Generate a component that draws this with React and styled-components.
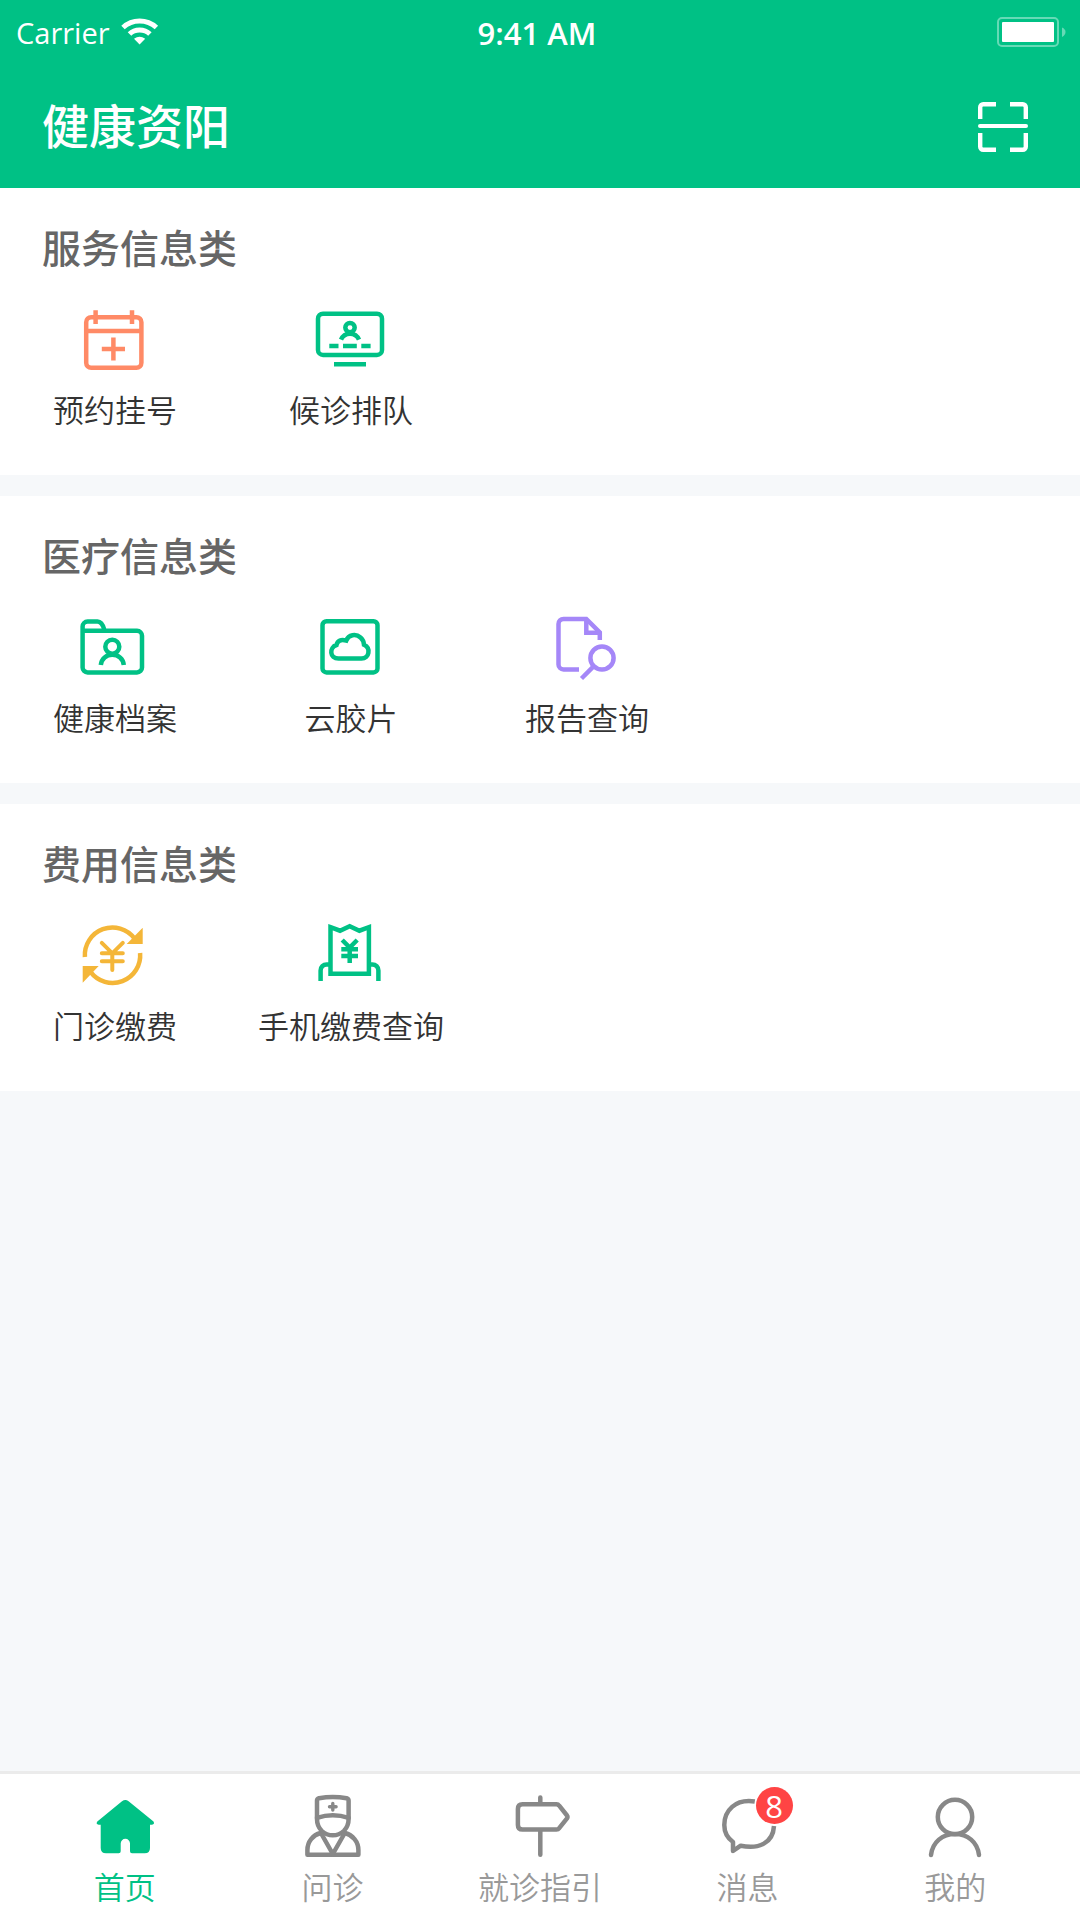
import React from 'react'
import styled, { createGlobalStyle } from 'styled-components'

const GlobalStyle = createGlobalStyle`
*{
  box-sizing: border-box;
}
body{
  margin: 0;
  background-color: #f6f8fa;
  font-family: "Noto Sans CJK SC", "Noto Sans", sans-serif;
}
a{
  color: inherit;
  text-decoration: none;
}
`

const Page = styled.div`
min-height: 100vh;
display: flex;
flex-direction: column;
`

const Header = styled.header`
background-color: #00c185;
color: white;
`

const StatusBar = styled.div`
height: 66px;
padding: 0 22px 0 16px;
display: grid;
grid-template-columns: 1fr auto 1fr;
align-items: center;
font-family: "Open Sans", "Noto Sans", sans-serif;
font-size: 29px;
line-height: 40px;
`

const Carrier = styled.div`
display: flex;
align-items: center;
gap: 11px;
`

const Time = styled.time`
font-size: 31px;
font-weight: 600;
`

const Battery = styled.div`
margin-right: -8px;
display: flex;
justify-content: flex-end;
`

const TitleBar = styled.div`
height: 122px;
padding: 0 52px 0 42px;
display: flex;
align-items: center;
justify-content: space-between;
`

const Title = styled.h1`
margin: 0;
padding-bottom: 6px;
font-size: 47px;
line-height: 64px;
font-weight: 500;
`

const ScanButton = styled.button`
display: flex;
padding: 0;
border: none;
background: none;
color: inherit;
cursor: pointer;
`

const Main = styled.main`
flex: 1;
display: flex;
flex-direction: column;
gap: 21px;
`

const Section = styled.section`
background-color: white;
padding: 30px 0 44px;
`

const SectionTitle = styled.h2`
margin: 0;
padding-left: 42px;
font-size: 39px;
line-height: 56px;
font-weight: 500;
color: #666;
`

const Tiles = styled.div`
margin-top: 30px;
padding: 0 15% 0 20px;
display: grid;
grid-template-columns: repeat(4, 1fr);
column-gap: 46px;
`

const Tile = styled.a`
display: flex;
flex-direction: column;
align-items: center;
gap: 11px;
font-size: 31px;
line-height: 44px;
font-weight: 350;
color: #333;
white-space: nowrap;
`

const TileIcon = styled.svg`
width: 72px;
height: 72px;
fill: none;
stroke: ${props => props.$color};
stroke-width: 4.5;
`

const TabBar = styled.nav`
height: 149px;
padding: 20px 21px 0;
border-top: 3px solid #ebebeb;
background-color: white;
display: grid;
grid-template-columns: repeat(5, 1fr);
`

const Tab = styled.a`
display: flex;
flex-direction: column;
align-items: center;
gap: 6px;
font-size: 31px;
line-height: 44px;
font-weight: 350;
color: ${props => props.$active ? '#00c185' : '#999'};
`

const TabIconBox = styled.span`
position: relative;
display: flex;
color: ${props => props.$active ? '#00c185' : '#888'};
`

const TabIcon = styled.svg`
width: 64px;
height: 64px;
fill: none;
stroke: currentColor;
stroke-width: 4.5;
stroke-linecap: round;
stroke-linejoin: round;
`

const Badge = styled.span`
position: absolute;
top: -7px;
left: 40px;
width: 37px;
height: 37px;
border-radius: 50%;
background-color: #ff4444;
color: white;
font-family: "Open Sans", "Noto Sans", sans-serif;
font-size: 31px;
font-weight: 400;
line-height: 39px;
text-align: center;
`

const GREEN = '#00c185'

const sections = [
  {
    title: '服务信息类',
    items: [
      {
        label: '预约挂号',
        color: '#ff8a66',
        icon: (
          <>
            <rect x="7.2" y="13.2" width="55.2" height="50.6" rx="5" />
            <path d="M7 27H62.5M16.6 6.3V20M53 6.3V20M22.8 45H46M34.4 33.4V56.6" />
          </>
        ),
      },
      {
        label: '候诊排队',
        color: GREEN,
        icon: (
          <>
            <rect x="3" y="9.7" width="64" height="41.2" rx="5" />
            <circle cx="35" cy="23.6" r="4.7" />
            <path d="M26 35.6A9.8 9.8 0 0 1 44 35.6" />
            <path d="M14.3 42H23.5M28 42H41.8M46.3 42H55.6M19 60.3H51" />
          </>
        ),
      },
    ],
  },
  {
    title: '医疗信息类',
    items: [
      {
        label: '健康档案',
        color: GREEN,
        icon: (
          <>
            <path d="M3.6 18.8H58a5 5 0 0 1 5 5V55.4a5 5 0 0 1-5 5H8.6a5 5 0 0 1-5-5V14.6a5 5 0 0 1 5-5H18.5C22.5 9.6 24 13 25.4 18" />
            <circle cx="33.3" cy="34.7" r="7" />
            <path d="M21.8 53C22.5 46.5 27.5 42.8 33.3 42.8S44.2 46.5 44.8 53" />
          </>
        ),
      },
      {
        label: '云胶片',
        color: GREEN,
        icon: (
          <>
            <rect x="7.5" y="9.2" width="55" height="51.2" rx="4" />
            <path d="M23.5 46.5C14.5 46.5 14 35.5 21.5 33C22.5 28.5 26 27.3 31.2 28.6C33.5 22.5 41 21.5 45.5 25.5C48 27.6 48.8 30 49 32.8C56 36 54.5 46.5 46.5 46.5Z" />
          </>
        ),
      },
      {
        label: '报告查询',
        color: '#a587f8',
        icon: (
          <>
            <path d="M28 57.4H12.5a5 5 0 0 1-5-5V12a5 5 0 0 1 5-5H35.3L48.8 20.5V28" />
            <path d="M35.3 7V20.8H48.8" />
            <circle cx="51" cy="46" r="11.6" />
            <path d="M42.8 54.2L30.5 66.5" />
          </>
        ),
      },
    ],
  },
  {
    title: '费用信息类',
    items: [
      {
        label: '门诊缴费',
        color: '#f4b638',
        icon: (
          <>
            <path d="M5.9 37A27.6 27.6 0 0 1 55.5 18.5M61.1 33A27.6 27.6 0 0 1 11.5 51.9" />
            <path d="M63.7 7.7V24H47.7ZM3.7 62.7V46H19.7Z" fill="#f4b638" stroke="none" />
            <path
              d="M22.8 22.9L33.3 33.3L43.8 22.9M22.8 33.2H43.8M22.8 41.3H43.8M33.3 33.3V50"
              strokeWidth="4"
              strokeLinecap="round"
            />
          </>
        ),
      },
      {
        label: '手机缴费查询',
        color: GREEN,
        icon: (
          <>
            <path d="M15.5 7.2L25 10.7L34.7 6.2L44.4 10.7L53.9 7.2V53.8H15.5Z" />
            <path d="M5.6 61V50.4a6 6 0 0 1 6-6H15.5M53.9 44.4H57.4a6 6 0 0 1 6 6V61" />
            <path d="M27.2 20L34.7 27.5L42.2 20M26.3 29.2H43M26.3 36H43M34.7 27V43" />
          </>
        ),
      },
    ],
  },
]

const tabs = [
  {
    label: '首页',
    active: true,
    icon: (
      <path
        d="M29 7.2Q32.3 4.8 35.6 7.2L60.5 27.6Q62 30.5 59 30.7H57V54q0 5.3-5.3 5.3H39q-2 0-2-2V49.5a4.6 4.6 0 0 0-9.3 0V57.3q0 2-2 2H13q-5.3 0-5.3-5.3V30.7H5.7Q2.5 30.5 4.3 27.6Z"
        fill="currentColor"
        stroke="none"
      />
    ),
  },
  {
    label: '问诊',
    icon: (
      <>
        <path d="M17 25V6.5Q17 4.8 19 4.2Q32.8 1.8 46.6 4.2Q48.6 4.8 48.6 6.5V25Q48.6 32 44 36.8Q39 41.3 32.8 41.3T21.6 36.8Q17 32 17 25Z" />
        <path d="M17 23.8Q32.8 18.6 48.6 23.8" />
        <path d="M32.8 9.5V16M29.5 12.7H36.1" strokeWidth="3.4" />
        <path d="M20.5 39C13 41 7.4 47.5 7.4 56V60.8H58.4V56C58.4 47.5 52.6 41 45 39" />
        <path d="M21.5 40L32.8 60L44.2 40" />
      </>
    ),
  },
  {
    label: '就诊指引',
    icon: (
      <>
        <path d="M32.3 3.5V9M32.3 37V60.7" />
        <path d="M14.5 10.3H48.5q1.7 0 2.7 1.4L59 21.5q1 1.4 0 2.9L51.2 34.2q-1 1.4-2.7 1.4H14.5q-4.6 0-4.6-4.6V15q0-4.7 4.6-4.7z" />
      </>
    ),
  },
  {
    label: '消息',
    badge: 8,
    icon: (
      <path
        d="M38.8 7.5C19 4.5 8.3 17 8.3 31C8.3 38 11.5 44 17 48V57L24.7 51.7C43 55.5 57 49 58 32"
        strokeLinecap="butt"
      />
    ),
  },
  {
    label: '我的',
    icon: (
      <>
        <circle cx="32" cy="23" r="17.2" />
        <path d="M8 61C9.5 48 19.5 40 32 40S54.5 48 56 61" />
      </>
    ),
  },
]

const App = () => {
  return (
    <Page>
      <GlobalStyle />

      <Header>
        <StatusBar>
          <Carrier>
            Carrier
            <svg width="38" height="32" viewBox="0 0 38 32" fill="none" stroke="white" strokeWidth="5" aria-hidden="true">
              <path d="M2 10.5Q9 4 18.6 4T35.4 10.5" />
              <path d="M8.5 17Q12.5 13 18.6 13T28.9 17" />
              <path d="M13 21.8Q18.6 17.8 24.2 21.8L18.6 27.5Z" fill="white" stroke="none" />
            </svg>
          </Carrier>
          <Time>9:41 AM</Time>
          <Battery>
            <svg width="69" height="32" viewBox="0 0 69 32" aria-hidden="true">
              <rect x="1" y="1" width="60" height="28" rx="4" fill="none" stroke="white" strokeOpacity="0.4" strokeWidth="2" />
              <rect x="5" y="5" width="52" height="20" rx="1" fill="white" />
              <path d="M65 10.5Q68.5 12 68.5 15T65 20Z" fill="white" fillOpacity="0.4" />
            </svg>
          </Battery>
        </StatusBar>

        <TitleBar>
          <Title>健康资阳</Title>
          <ScanButton aria-label="扫一扫">
            <svg width="50" height="50" viewBox="0 0 50 50" fill="none" stroke="currentColor" strokeWidth="4.4">
              <path d="M2.2 17V5.2a3 3 0 0 1 3-3H18M32 2.2H44.8a3 3 0 0 1 3 3V17M2.2 31V44.8a3 3 0 0 0 3 3H18M32 47.8H44.8a3 3 0 0 0 3-3V31" />
              <path d="M2 24H48" strokeLinecap="round" strokeWidth="4" />
            </svg>
          </ScanButton>
        </TitleBar>
      </Header>

      <Main>
        {sections.map(section => (
          <Section key={section.title}>
            <SectionTitle>{section.title}</SectionTitle>
            <Tiles>
              {section.items.map(item => (
                <Tile key={item.label} href="#">
                  <TileIcon viewBox="0 0 72 72" $color={item.color} aria-hidden="true">
                    {item.icon}
                  </TileIcon>
                  {item.label}
                </Tile>
              ))}
            </Tiles>
          </Section>
        ))}
      </Main>

      <TabBar>
        {tabs.map(tab => (
          <Tab key={tab.label} href="#" $active={tab.active}>
            <TabIconBox $active={tab.active}>
              <TabIcon viewBox="0 0 64 64" aria-hidden="true">
                {tab.icon}
              </TabIcon>
              {tab.badge && <Badge>{tab.badge}</Badge>}
            </TabIconBox>
            {tab.label}
          </Tab>
        ))}
      </TabBar>
    </Page>
  )
}

export default App
